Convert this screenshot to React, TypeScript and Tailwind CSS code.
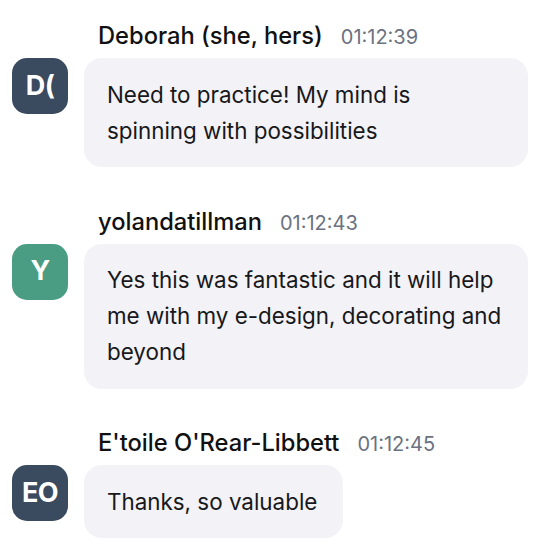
const messages = [
  {
    id: "1",
    name: "Deborah (she, hers)",
    time: "01:12:39",
    initials: "D(",
    color: "bg-[#3a4a5f]",
    text: "Need to practice! My mind is spinning with possibilities",
  },
  {
    id: "2",
    name: "yolandatillman",
    time: "01:12:43",
    initials: "Y",
    color: "bg-[#4a9c83]",
    text: "Yes this was fantastic and it will help me with my e-design, decorating and beyond",
  },
  {
    id: "3",
    name: "E'toile O'Rear-Libbett",
    time: "01:12:45",
    initials: "EO",
    color: "bg-[#3a4a5f]",
    text: "Thanks, so valuable",
  },
];

type Message = (typeof messages)[number];

function ChatMessage({ message }: { message: Message }) {
  return (
    <div className="flex flex-col">
      <div className="flex items-baseline gap-[18px] pl-[86px] leading-[26px]">
        <span className="text-[23.7px] font-medium text-[#111111]">{message.name}</span>
        <span className="text-[20px] text-[#6b7280]">{message.time}</span>
      </div>
      <div className="mt-[8px] flex items-start gap-4">
        <div
          className={`flex h-14 w-14 shrink-0 items-center justify-center rounded-[15px] text-[27px] font-bold tracking-[-0.5px] text-white ${message.color}`}
        >
          {message.initials}
        </div>
        <div className="max-w-[444px] rounded-[18px] bg-[#f2f2f7] py-[18.5px] pl-[23px] pr-[26px] text-[22.4px] leading-[36px] text-[#18181b]">
          {message.text}
        </div>
      </div>
    </div>
  );
}

export default function App() {
  return (
    <div
      className="flex min-h-[550px] w-[556px] flex-col gap-[41.5px] bg-white pl-3 pt-[23px]"
      style={{ fontFamily: "Inter, 'Noto Sans', sans-serif" }}
    >
      {messages.map((message) => (
        <ChatMessage key={message.id} message={message} />
      ))}
    </div>
  );
}
